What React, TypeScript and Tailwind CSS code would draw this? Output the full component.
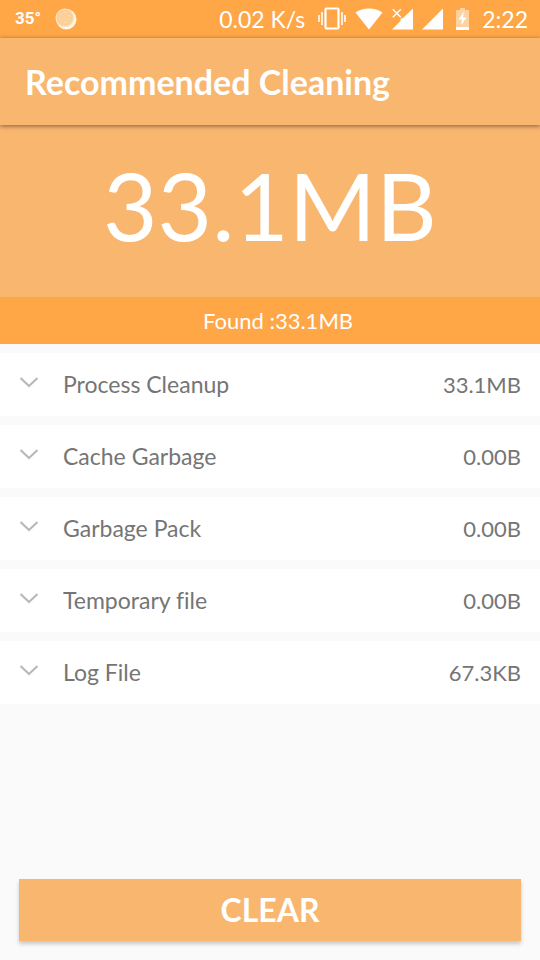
/**
 * Recommended cleaning screen
 * - Shows the amount of junk found, broken down by category.
 * - The CLEAR button resets every category to zero.
 */
import React, { useState } from 'react';

interface JunkCategory {
  id: string;
  name: string;
  size: string;
}

const CATEGORIES: JunkCategory[] = [
  { id: 'process', name: 'Process Cleanup', size: '33.1MB' },
  { id: 'cache', name: 'Cache Garbage', size: '0.00B' },
  { id: 'pack', name: 'Garbage Pack', size: '0.00B' },
  { id: 'temp', name: 'Temporary file', size: '0.00B' },
  { id: 'log', name: 'Log File', size: '67.3KB' }
];

const MoonIcon = () => (
  <svg width="22" height="22" viewBox="0 0 22 22" aria-hidden="true">
    <circle cx="11.3" cy="11.3" r="10.2" fill="#fff6e6" />
    <circle cx="9.8" cy="9.8" r="9" fill="#fdd09a" />
    <circle cx="9.8" cy="9.8" r="8.8" fill="none" stroke="#ffe3c0" strokeWidth="1" />
    <path
      d="M5 6.5l2-1.5M9 4.5h2M13.5 7l1 2M6 11l1.500 1M9 14.500h2M12.500 12l1-1M4.500 9v1"
      stroke="#ffdcb0"
      strokeWidth="1"
      fill="none"
    />
  </svg>
);

const VibrateIcon = () => (
  <svg width="28" height="24" viewBox="0 0 28 24" fill="none" stroke="#fff" aria-hidden="true">
    <rect x="7.500" y="1.500" width="13" height="20" rx="1" strokeWidth="2.200" />
    <path d="M4 5v13M24 5v13" strokeWidth="1.600" />
    <path d="M1 8v7M27 8v7" strokeWidth="1.600" />
  </svg>
);

const WifiIcon = () => (
  <svg width="28" height="22" viewBox="0 0 28 22" fill="#fff" aria-hidden="true">
    <path d="M14 21.500L0.500 4.500C4.500 1.600 9 0.400 14 0.400S23.500 1.600 27.500 4.500z" />
  </svg>
);

const SignalIcon = ({ noService = false }: { noService?: boolean }) => (
  <svg width="21" height="22" viewBox="0 0 21 22" aria-hidden="true">
    {noService ? (
      <>
        <path d="M21 0.500V21.500H0L8.500 13V11L11 10z" fill="#fff" />
        <path d="M0.800 1.200l8 8M8.800 1.200l-8 8" stroke="#fff" strokeWidth="1.500" />
      </>
    ) : (
      <path d="M21 0.500V21.500H0z" fill="#fff" />
    )}
  </svg>
);

const BatteryIcon = () => (
  <svg width="13" height="22" viewBox="0 0 13 22" aria-hidden="true">
    <path d="M4 0h5v2h4v17H0V2h4z" fill="#ffd3a1" />
    <path d="M0 19h13v3H0z" fill="#fff" />
    <path d="M7.800 4L2.500 11.500H6L5 17.500L10.500 9.500H7z" fill="#fff" />
  </svg>
);

const ChevronIcon = ({ open }: { open: boolean }) => (
  <svg
    width="20"
    height="12"
    viewBox="0 0 20 12"
    fill="none"
    stroke="#b9b9b9"
    strokeWidth="2.200"
    className={open ? 'rotate-180' : ''}
    aria-hidden="true"
  >
    <path d="M1.500 1L10 9L18.500 1" />
  </svg>
);

const StatusBar = () => (
  <div className="flex h-[38px] items-center justify-between bg-[#ffa647] px-3 text-white">
    <div className="flex items-center gap-[14px]">
      <span className="pl-[3px] font-['Roboto',sans-serif] text-[17px] font-bold">35°</span>
      <MoonIcon />
    </div>
    <div className="flex items-center gap-[9px]">
      <span className="pr-1 text-[23px]">0.02 K/s</span>
      <VibrateIcon />
      <WifiIcon />
      <SignalIcon noService />
      <SignalIcon />
      <span className="px-1">
        <BatteryIcon />
      </span>
      <span className="text-[23px]">2:22</span>
    </div>
  </div>
);

const App: React.FC = () => {
  const [categories, setCategories] = useState<JunkCategory[]>(CATEGORIES);
  const [total, setTotal] = useState<string>('33.1MB');
  const [openId, setOpenId] = useState<string>('');

  function clearAll() {
    setCategories(categories.map((c) => ({ ...c, size: '0.00B' })));
    setTotal('0.00B');
    setOpenId('');
  }

  return (
    <div className="flex min-h-screen flex-col bg-[#fafafa] font-['Lato','Noto_Sans',sans-serif] [font-variant-ligatures:none]">
      <StatusBar />

      <header className="relative flex h-[87px] items-center bg-[#f8b66f] px-[25px] shadow-[0_0_4px_rgba(0,0,0,0.25),0_2px_4px_rgba(0,0,0,0.25)]">
        <h1 className="text-[34px] font-bold text-white">Recommended Cleaning</h1>
      </header>

      <main className="flex flex-1 flex-col">
        <div className="flex h-[172px] items-center justify-center bg-[#f8b66f] pb-3">
          <p className="text-[94px] leading-none text-white">{total}</p>
        </div>
        <p className="flex h-[47px] items-center justify-center bg-[#ffa647] pl-4 text-[22px] text-white">
          Found :{total}
        </p>

        <ul className="flex flex-col gap-[9px] py-[9px] text-[#757575]">
          {categories.map((c) => (
            <li key={c.id}>
              <button
                type="button"
                aria-expanded={openId === c.id}
                onClick={() => setOpenId(openId === c.id ? '' : c.id)}
                className="flex h-[63px] w-full items-center bg-white px-[19px] text-left"
              >
                <span className="pb-1">
                  <ChevronIcon open={openId === c.id} />
                </span>
                <span className="flex-1 pl-6 text-[23px]">{c.name}</span>
                <span className="text-[22px]">{c.size}</span>
              </button>
            </li>
          ))}
        </ul>

        <div className="mt-auto p-[19px]">
          <button
            type="button"
            onClick={clearAll}
            className="h-[62px] w-full bg-[#f8b66f] text-[32px] font-bold text-white shadow-[0_3px_4px_rgba(0,0,0,0.2)]"
          >
            CLEAR
          </button>
        </div>
      </main>
    </div>
  );
};

export default App;
